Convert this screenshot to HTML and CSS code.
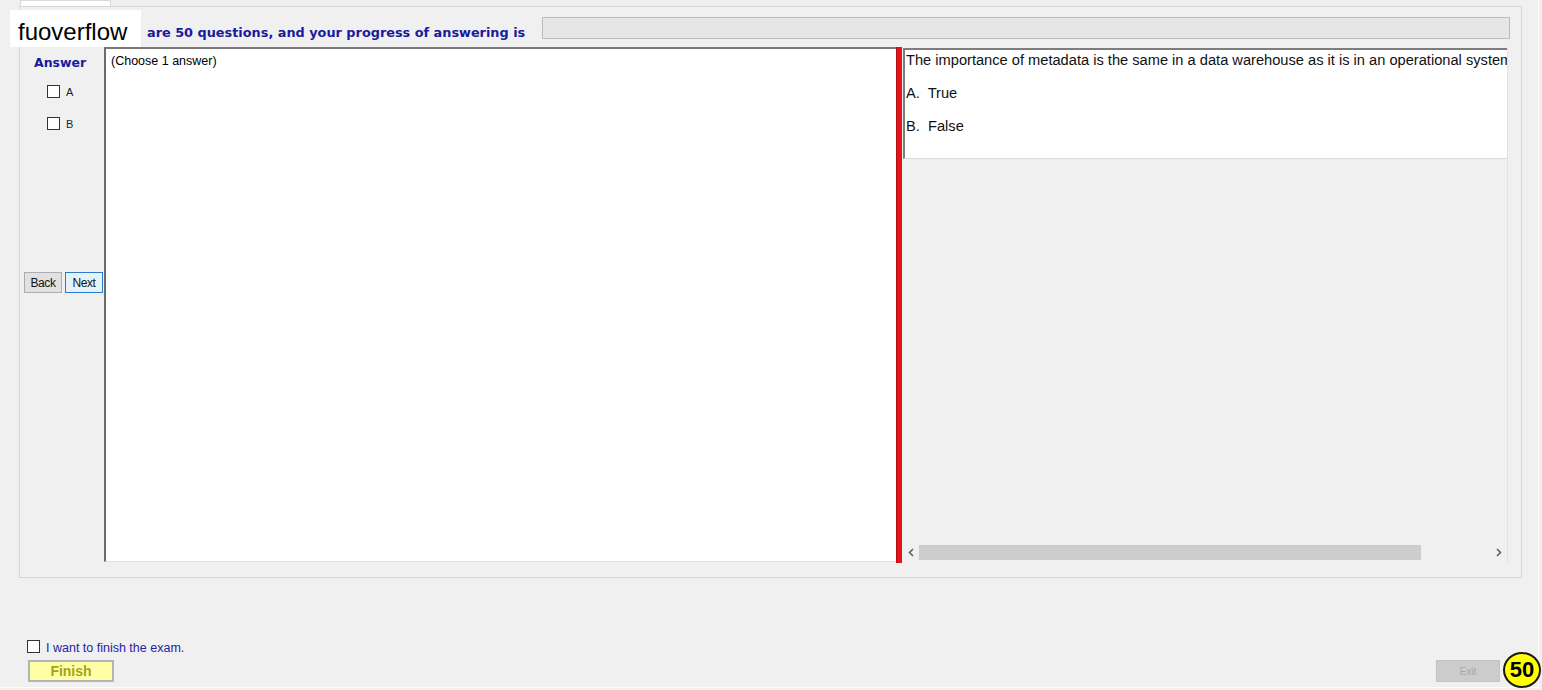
FILE: index.html
```html
<!DOCTYPE html>
<html>
<head>
<meta charset="utf-8">
<title>Exam</title>
<link rel="stylesheet" href="styles.css">
</head>
<body>
<div class="window">
	<div class="tabs"><div class="tab"></div></div>

	<div class="panel">
		<div class="head">
			<span class="title">are 50 questions, and your progress of answering is</span>
			<div class="progress"></div>
		</div>

		<div class="work">
			<div class="side">
				<div class="answer">Answer</div>
				<label class="opt"><span class="box"></span>A</label>
				<label class="opt"><span class="box"></span>B</label>
				<div class="nav">
					<button class="btn back">Back</button>
					<button class="btn next">Next</button>
				</div>
			</div>

			<div class="choose">(Choose 1 answer)</div>
			<div class="split"></div>

			<div class="view">
				<div class="question">
					<p>The importance of metadata is the same in a data warehouse as it is in an operational system.</p>
					<p>A.&nbsp; True</p>
					<p>B.&nbsp; False</p>
				</div>
				<div class="scroll">
					<span class="arrow"><svg width="6" height="9" viewBox="0 0 6 9"><path d="M5 1 L1.5 4.5 L5 8" fill="none" stroke="#606060" stroke-width="1.6"/></svg></span>
					<span class="track"><span class="thumb"></span></span>
					<span class="arrow"><svg width="6" height="9" viewBox="0 0 6 9"><path d="M1 1 L4.5 4.5 L1 8" fill="none" stroke="#606060" stroke-width="1.6"/></svg></span>
				</div>
			</div>
		</div>
	</div>

	<div class="foot">
		<div class="finish-group">
			<label class="confirm"><span class="box"></span>I want to finish the exam.</label>
			<button class="finish">Finish</button>
		</div>
		<button class="exit">Exit</button>
	</div>
</div>

<div class="brand">fuoverflow</div>
<div class="badge">50</div>
</body>
</html>
```

FILE: styles.css
```css
* {
	box-sizing: border-box;
}

body {
	margin: 0;
	width: 1542px;
	height: 690px;
	overflow: hidden;
	position: relative;
	background: #f0f0f0;
	font-family: "Liberation Sans", Arial, sans-serif;
	color: #000;
}

.window {
	width: 1539px;
	height: 688px;
	border-right: 1px solid #fbfbfb;
	border-bottom: 1px solid #fbfbfb;
}

.tabs {
	height: 6px;
	padding-left: 20px;
}

.tab {
	width: 91px;
	height: 6px;
	background: #fff;
	border: 1px solid #d9d9d9;
	border-bottom: none;
}

.panel {
	margin-left: 19px;
	width: 1503px;
	height: 572px;
	border: 1px solid #d6d6d6;
	background: #f0f0f0;
	display: flex;
	flex-direction: column;
}

/* header row */
.head {
	height: 40px;
	display: flex;
	align-items: flex-start;
	padding-left: 127px;
}

.title {
	margin-top: 18px;
	font-family: "DejaVu Sans", Verdana, sans-serif;
	font-size: 12.85px;
	line-height: 16px;
	font-weight: bold;
	color: #1a1a9e;
}

.progress {
	margin: 10px 11px 0 auto;
	width: 968px;
	height: 22px;
	background: #e6e6e6;
	border: 1px solid #bcbcbc;
}

/* work area */
.work {
	height: 516px;
	display: flex;
}

.side {
	width: 84px;
	display: flex;
	flex-direction: column;
}

.answer {
	margin: 8px 0 0 14px;
	font-family: "DejaVu Sans", Verdana, sans-serif;
	font-size: 12.5px;
	line-height: 16px;
	font-weight: bold;
	color: #1a1a9e;
}

.opt {
	display: flex;
	align-items: center;
	gap: 6px;
	margin-left: 27px;
	font-size: 11px;
	color: #222;
	height: 13px;
}

.opt:nth-of-type(1) {
	margin-top: 14px;
}

.opt + .opt {
	margin-top: 19px;
}

.box {
	width: 13px;
	height: 13px;
	background: #fff;
	border: 1px solid #333;
	flex: none;
}

.nav {
	margin: 142px 0 0 4px;
	display: flex;
	gap: 3px;
}

.btn {
	width: 38px;
	height: 21px;
	padding: 0;
	font-family: inherit;
	font-size: 12px;
	letter-spacing: -.4px;
	color: #111;
	background: #e1e1e1;
	border: 1px solid #adadad;
}

.btn.next {
	background: #e5f1fb;
	border-color: #2b7cc7;
}

.choose {
	width: 792px;
	height: 515px;
	background: #fff;
	border-top: 2px solid #7a7a7a;
	border-left: 2px solid #6b6b6b;
	border-bottom: 1px solid #e0e0e0;
	padding: 5px 0 0 5px;
	font-size: 12.5px;
	line-height: 14px;
}

.split {
	width: 6px;
	height: 516px;
	background: #e3141a;
	border-left: 1px solid #b30d12;
}

.view {
	width: 606px;
	height: 515px;
	padding-left: 1px;
	border-right: 1px solid #e2e2e2;
	display: flex;
	flex-direction: column;
}

.question {
	margin-top: 1px;
	height: 111px;
	background: #fff;
	border-top: 2px solid #7d7d7d;
	border-left: 2px solid #7d7d7d;
	border-bottom: 1px solid #dcdcdc;
	padding: 2px 0 0 1px;
	overflow: hidden;
	white-space: nowrap;
	font-size: 14.65px;
	line-height: 17px;
	color: #111;
}

.question p {
	margin: 0 0 16px;
}

.scroll {
	margin-top: auto;
	height: 17px;
	margin-bottom: 1px;
	display: flex;
	align-items: center;
	background: #f0f0f0;
}

.arrow {
	width: 16px;
	height: 15px;
	display: flex;
	align-items: center;
	justify-content: center;
}

.track {
	flex: 1;
	height: 15px;
}

.thumb {
	display: block;
	width: 502px;
	height: 15px;
	background: #cdcdcd;
}

/* footer */
.foot {
	height: 110px;
	display: flex;
	justify-content: space-between;
	align-items: flex-end;
	padding: 0 38px 6px 27px;
}

.finish-group {
	display: flex;
	flex-direction: column;
	gap: 4px;
}

.confirm {
	display: flex;
	align-items: flex-start;
	gap: 6px;
	font-size: 12.5px;
	line-height: 16px;
	color: #2323a3;
}

.finish {
	margin-left: 1px;
	width: 86px;
	height: 22px;
	padding: 0;
	font-family: inherit;
	font-size: 14px;
	font-weight: bold;
	color: #a3a318;
	background: #ffffa6;
	border: 2px solid #b4b4b4;
}

.exit {
	width: 64px;
	height: 22px;
	padding: 0;
	font-family: inherit;
	font-size: 10px;
	color: #a6a6a6;
	background: #cccccc;
	border: 1px solid #c2c2c2;
}

/* overlays */
.brand {
	position: absolute;
	left: 10px;
	top: 10px;
	width: 131px;
	height: 37px;
	background: #fff;
	padding-left: 8px;
	font-size: 24px;
	line-height: 44px;
	color: #000;
}

.badge {
	position: absolute;
	left: 1503px;
	top: 652px;
	width: 38px;
	height: 36px;
	border-radius: 50%;
	background: #ffff00;
	border: 2px solid #1a1a1a;
	text-align: center;
	font-size: 22px;
	line-height: 32px;
	font-weight: bold;
}
```
